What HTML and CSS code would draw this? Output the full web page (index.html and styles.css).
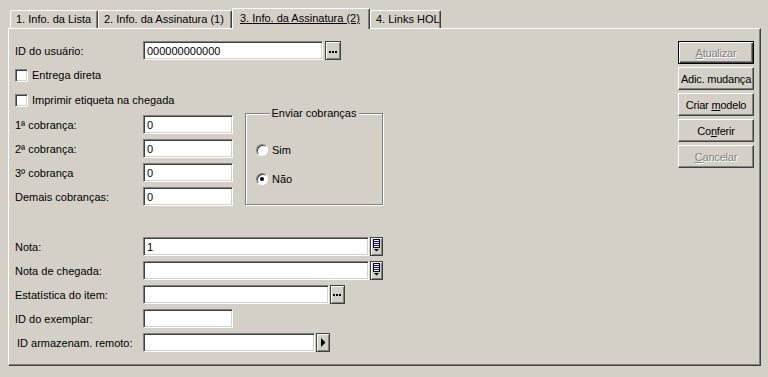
FILE: index.html
```html
<!DOCTYPE html>
<html lang="pt">
<head>
  <meta charset="UTF-8">
  <title>Info. da Assinatura (2)</title>
  <link rel="stylesheet" href="styles.css">
</head>
<body>

  <!-- Tab strip -->
  <div class="tabs">
    <div class="tab tab-1">1. Info. da Lista</div>
    <div class="tab tab-2">2. Info. da Assinatura (1)</div>
    <div class="tab tab-3 active"><u>3. Info. da Assinatura (2)</u></div>
    <div class="tab tab-4">4. Links HOL</div>
  </div>

  <div class="panel">
    <div class="form">

      <div class="row">
        <label class="lbl">ID do usuário:</label>
        <input class="field w-id" type="text" value="000000000000">
        <button class="mini w-16">
          <svg width="14" height="17" viewBox="0 0 14 17"><rect x="3" y="9" width="2" height="2"/><rect x="6" y="9" width="2" height="2"/><rect x="9" y="9" width="2" height="2"/></svg>
        </button>
      </div>

      <div class="row check-row">
        <span class="checkbox"></span>
        <span>Entrega direta</span>
      </div>

      <div class="row check-row">
        <span class="checkbox"></span>
        <span>Imprimir etiqueta na chegada</span>
      </div>

      <!-- Reminders + radio group -->
      <div class="mid">
        <div class="col">
          <div class="row">
            <label class="lbl">1ª cobrança:</label>
            <input class="field w-90" type="text" value="0">
          </div>
          <div class="row">
            <label class="lbl">2ª cobrança:</label>
            <input class="field w-90" type="text" value="0">
          </div>
          <div class="row">
            <label class="lbl">3º cobrança</label>
            <input class="field w-90" type="text" value="0">
          </div>
          <div class="row">
            <label class="lbl">Demais cobranças:</label>
            <input class="field w-90" type="text" value="0">
          </div>
        </div>

        <div class="group">
          <div class="group-title"><span>Enviar cobranças</span></div>
          <div class="radio-row">
            <span class="radio"></span>
            <span>Sim</span>
          </div>
          <div class="radio-row">
            <span class="radio checked"></span>
            <span>Não</span>
          </div>
        </div>
      </div>

      <div class="row spaced">
        <label class="lbl">Nota:</label>
        <input class="field w-nota" type="text" value="1">
        <button class="mini w-13">
          <svg width="11" height="17" viewBox="0 0 11 17"><rect x="2.5" y="1.5" width="6" height="8" fill="#fff" stroke="#000"/><rect x="3" y="3" width="5" height="1" fill="#0000ff"/><rect x="3" y="5" width="5" height="1" fill="#0000ff"/><rect x="3" y="7" width="5" height="1" fill="#0000ff"/><polygon points="3,11 8,11 5.5,13.5"/></svg>
        </button>
      </div>

      <div class="row">
        <label class="lbl">Nota de chegada:</label>
        <input class="field w-nota" type="text" value="">
        <button class="mini w-13">
          <svg width="11" height="17" viewBox="0 0 11 17"><rect x="2.5" y="1.5" width="6" height="8" fill="#fff" stroke="#000"/><rect x="3" y="3" width="5" height="1" fill="#0000ff"/><rect x="3" y="5" width="5" height="1" fill="#0000ff"/><rect x="3" y="7" width="5" height="1" fill="#0000ff"/><polygon points="3,11 8,11 5.5,13.5"/></svg>
        </button>
      </div>

      <div class="row">
        <label class="lbl">Estatística do item:</label>
        <input class="field w-stat" type="text" value="">
        <button class="mini w-15">
          <svg width="13" height="17" viewBox="0 0 13 17"><rect x="2" y="8" width="2" height="2"/><rect x="5" y="8" width="2" height="2"/><rect x="8" y="8" width="2" height="2"/></svg>
        </button>
      </div>

      <div class="row">
        <label class="lbl">ID do exemplar:</label>
        <input class="field w-90" type="text" value="">
      </div>

      <div class="row">
        <label class="lbl indent">ID armazenam. remoto:</label>
        <input class="field w-remote" type="text" value="">
        <button class="mini w-14">
          <svg width="12" height="17" viewBox="0 0 12 17"><polygon points="4,4 4,13 8.5,8.5"/></svg>
        </button>
      </div>

    </div>

    <!-- Action buttons -->
    <div class="actions">
      <button class="btn default" disabled><u>A</u>tualizar</button>
      <button class="btn">Adic. mudança</button>
      <button class="btn">Criar <u>m</u>odelo</button>
      <button class="btn">Co<u>n</u>ferir</button>
      <button class="btn" disabled><u>C</u>ancelar</button>
    </div>
  </div>

</body>
</html>
```

FILE: styles.css
```css
body {
  margin: 0;
  background-color: #d4d0c8;
  font-family: "Liberation Sans", Arial, sans-serif;
  font-size: 11px;
  color: #000;
}

/* Tabs */
.tabs {
  display: flex;
  align-items: flex-start;
  height: 28px;
  box-sizing: border-box;
  padding: 10px 0 0 10px;
}

.tab {
  height: 18px;
  box-sizing: border-box;
  line-height: 16px;
  padding-left: 5px;
  border-top: 1px solid #fff;
  border-left: 1px solid #fff;
  border-right: 1px solid #404040;
  box-shadow: inset -1px 0 0 #808080;
  border-radius: 2px 2px 0 0;
  white-space: nowrap;
}

.tab-1 { width: 88px; }
.tab-2 { width: 134px; }
.tab-3 { width: 138px; }
.tab-4 { width: 71px; }

.tab.active {
  position: relative;
  z-index: 1;
  height: 21px;
  margin-top: -2px;
  line-height: 18px;
  padding-left: 7px;
  background-color: #d4d0c8;
}

/* Panel */
.panel {
  display: flex;
  justify-content: space-between;
  margin-left: 8px;
  width: 753px;
  height: 338px;
  box-sizing: border-box;
  border-top: 1px solid #fff;
  border-left: 1px solid #fff;
  border-right: 1px solid #404040;
  border-bottom: 1px solid #404040;
  box-shadow: inset -1px -1px 0 #808080;
}

.form {
  display: flex;
  flex-direction: column;
  gap: 5px;
  padding: 12px 0 0 6px;
}

.row {
  display: flex;
  align-items: center;
  height: 19px;
}

.check-row {
  height: 20px;
  gap: 4px;
}

.row.spaced {
  margin-top: 26px;
}

.lbl {
  width: 128px;
  flex-shrink: 0;
}

.lbl.indent {
  padding-left: 2px;
  box-sizing: border-box;
}

/* Sunken text box */
.field {
  height: 19px;
  box-sizing: border-box;
  margin: 0;
  padding: 0 3px;
  font-family: inherit;
  font-size: 11px;
  color: #000;
  background-color: #fff;
  border: 1px solid;
  border-color: #808080 #fff #fff #808080;
  box-shadow: inset 1px 1px 0 #404040, inset -1px -1px 0 #d4d0c8;
  outline: none;
}

.w-id { width: 180px; }
.w-90 { width: 90px; }
.w-nota { width: 226px; }
.w-stat { width: 186px; }
.w-remote { width: 172px; }

/* Small buttons next to fields */
.mini {
  height: 19px;
  box-sizing: border-box;
  margin-left: 1px;
  padding: 0;
  display: flex;
  background-color: #d4d0c8;
  border: 1px solid #404040;
  box-shadow: inset 1px 1px 0 #fff, inset -1px -1px 0 #808080;
}

.mini svg { display: block; }

.w-16 { width: 16px; margin-left: 2px; }
.w-13 { width: 13px; }
.w-15 { width: 15px; }
.w-14 { width: 14px; }

/* Checkbox */
.checkbox {
  width: 13px;
  height: 13px;
  box-sizing: border-box;
  background-color: #fff;
  border: 1px solid;
  border-color: #808080 #fff #fff #808080;
  box-shadow: inset 1px 1px 0 #404040, inset -1px -1px 0 #d4d0c8;
}

/* Reminder block */
.mid {
  display: flex;
  align-items: flex-start;
}

.col {
  display: flex;
  flex-direction: column;
  gap: 5px;
}

.group {
  position: relative;
  margin: -2px 0 0 12px;
  width: 138px;
  height: 92px;
  box-sizing: border-box;
  padding: 28px 0 0 10px;
  display: flex;
  flex-direction: column;
  gap: 13px;
  border: 1px solid #808080;
  box-shadow: inset 1px 1px 0 #fff, 1px 1px 0 #fff;
}

.group-title {
  position: absolute;
  top: -8px;
  left: 0;
  right: 0;
  text-align: center;
  line-height: 14px;
}

.group-title span {
  background-color: #d4d0c8;
  padding: 0 2px;
}

.radio-row {
  display: flex;
  align-items: center;
  gap: 4px;
  height: 16px;
}

.radio {
  position: relative;
  width: 12px;
  height: 12px;
  box-sizing: border-box;
  border-radius: 50%;
  background-color: #fff;
  border: 1px solid;
  border-color: #808080 #fff #fff #808080;
  box-shadow: inset 1px 1px 0 #404040;
}

.radio.checked::after {
  content: "";
  position: absolute;
  left: 3px;
  top: 3px;
  width: 4px;
  height: 4px;
  border-radius: 50%;
  background-color: #000;
}

/* Right hand buttons */
.actions {
  display: flex;
  flex-direction: column;
  gap: 3px;
  padding: 12px 6px 0 0;
}

.btn {
  width: 76px;
  height: 23px;
  box-sizing: border-box;
  padding: 0;
  font-family: inherit;
  font-size: 11px;
  letter-spacing: -0.2px;
  color: #000;
  white-space: nowrap;
  background-color: #d4d0c8;
  border: 1px solid;
  border-color: #fff #404040 #404040 #fff;
  box-shadow: inset -1px -1px 0 #808080;
}

.btn.default {
  border-color: #000;
  box-shadow: inset 1px 1px 0 #fff, inset -1px -1px 0 #404040, inset -2px -2px 0 #808080;
}

.btn:disabled {
  color: #808080;
  text-shadow: 1px 1px 0 #fff;
}
```
